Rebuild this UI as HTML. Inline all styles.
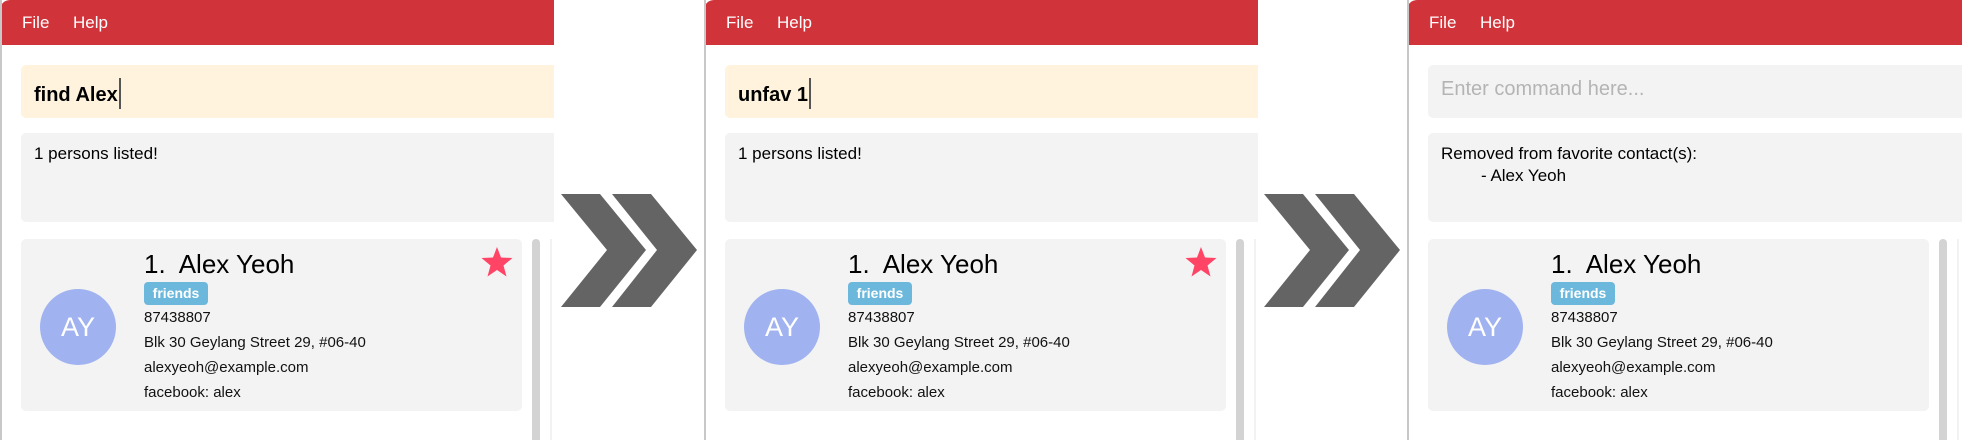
<!DOCTYPE html>
<html><head><meta charset="utf-8"><style>
*{margin:0;padding:0;box-sizing:border-box}
body{width:1962px;height:440px;background:#fff;position:relative;overflow:hidden;font-family:"Liberation Sans",sans-serif}
.p{position:absolute;top:0;height:440px;width:554px;overflow:hidden;background:#fff;border-left:2px solid #c8c8c8}
.hdr{position:absolute;left:-2px;top:0;right:0;height:45px;background:#d1333a;border-top-left-radius:10px}
.m{position:absolute;top:13px;color:#fff;font-size:17px}
.cmd{position:absolute;left:19px;top:65px;width:600px;height:53px;background:#fff3dd;border-radius:5px}
.cmd span{position:absolute;left:13px;top:13px;font-size:20px;font-weight:bold;color:#000}
.cur{display:inline-block;width:2px;height:31px;background:#555;vertical-align:-8px;margin-left:1px}
.res{position:absolute;left:19px;top:133px;width:600px;height:89px;background:#f3f3f3;border-radius:5px;font-size:17px;color:#000;padding:10px 13px;line-height:22px}
.card{position:absolute;left:19px;top:239px;width:501px;height:172px;background:#f3f3f3;border-radius:5px}
.av{position:absolute;left:19px;top:50px;width:76px;height:76px;border-radius:50%;background:#a0b3f0;color:#fff;font-size:27px;text-align:center;line-height:76px;font-weight:300}
.nm{position:absolute;left:123px;top:10px;font-size:26px;color:#000;white-space:pre}
.tag{position:absolute;left:123px;top:43px;width:64px;height:23px;background:#6cb8dc;border-radius:4px;color:#fff;font-weight:bold;font-size:14px;text-align:center;line-height:23px}
.ln{position:absolute;left:123px;font-size:15px;color:#111}
.star{position:absolute;left:460px;top:8px}
.sb{position:absolute;left:530px;top:239px;width:8px;height:210px;background:#d3d3d3;border-radius:4px}
.sl{position:absolute;left:548px;top:239px;width:2px;height:210px;background:#f2f2f2}
</style></head><body>

<div class="p" style="left:0">
<div class="hdr"></div><div class="m" style="left:20px">File</div><div class="m" style="left:71px">Help</div>
<div class="cmd"><span>find Alex<i class="cur"></i></span></div>
<div class="res">1 persons listed!</div>
<div class="card"><div class="av">AY</div><div class="nm">1.  Alex Yeoh</div><div class="tag">friends</div>
<div class="ln" style="top:70px">87438807</div><div class="ln" style="top:95px">Blk 30 Geylang Street 29, #06-40</div><div class="ln" style="top:120px">alexyeoh@example.com</div><div class="ln" style="top:145px">facebook: alex</div>
<svg class="star" width="32" height="30" viewBox="0 0 32 30"><polygon points="16,0 20,10.5 31.5,11 22.5,18.5 25.5,29.5 16,23 6.5,29.5 9.5,18.5 0.5,11 12,10.5" fill="#ff4466"/></svg></div>
<div class="sb"></div><div class="sl"></div>
</div>

<svg style="position:absolute;left:560px;top:194px" width="140" height="114" viewBox="0 0 140 114"><polygon points="1,0 40,0 86,56 40,113 1,113 47,56" fill="#646464"/><polygon points="52,0 91,0 137,56 91,113 52,113 97,56" fill="#646464"/></svg>

<div class="p" style="left:704px">
<div class="hdr"></div><div class="m" style="left:20px">File</div><div class="m" style="left:71px">Help</div>
<div class="cmd"><span>unfav 1<i class="cur"></i></span></div>
<div class="res">1 persons listed!</div>
<div class="card"><div class="av">AY</div><div class="nm">1.  Alex Yeoh</div><div class="tag">friends</div>
<div class="ln" style="top:70px">87438807</div><div class="ln" style="top:95px">Blk 30 Geylang Street 29, #06-40</div><div class="ln" style="top:120px">alexyeoh@example.com</div><div class="ln" style="top:145px">facebook: alex</div>
<svg class="star" width="32" height="30" viewBox="0 0 32 30"><polygon points="16,0 20,10.5 31.5,11 22.5,18.5 25.5,29.5 16,23 6.5,29.5 9.5,18.5 0.5,11 12,10.5" fill="#ff4466"/></svg></div>
<div class="sb"></div><div class="sl"></div>
</div>

<svg style="position:absolute;left:1263px;top:194px" width="140" height="114" viewBox="0 0 140 114"><polygon points="1,0 40,0 86,56 40,113 1,113 47,56" fill="#646464"/><polygon points="52,0 91,0 137,56 91,113 52,113 97,56" fill="#646464"/></svg>

<div class="p" style="left:1407px;width:555px">
<div class="hdr"></div><div class="m" style="left:20px">File</div><div class="m" style="left:71px">Help</div>
<div class="cmd" style="background:#f3f3f3"><span style="color:#b4b4b4;font-weight:500">Enter command here...</span></div>
<div class="res">Removed from favorite contact(s):<br><span style="padding-left:40px">- Alex Yeoh</span></div>
<div class="card"><div class="av">AY</div><div class="nm">1.  Alex Yeoh</div><div class="tag">friends</div>
<div class="ln" style="top:70px">87438807</div><div class="ln" style="top:95px">Blk 30 Geylang Street 29, #06-40</div><div class="ln" style="top:120px">alexyeoh@example.com</div><div class="ln" style="top:145px">facebook: alex</div></div>
<div class="sb"></div><div class="sl"></div>
</div>

</body></html>
